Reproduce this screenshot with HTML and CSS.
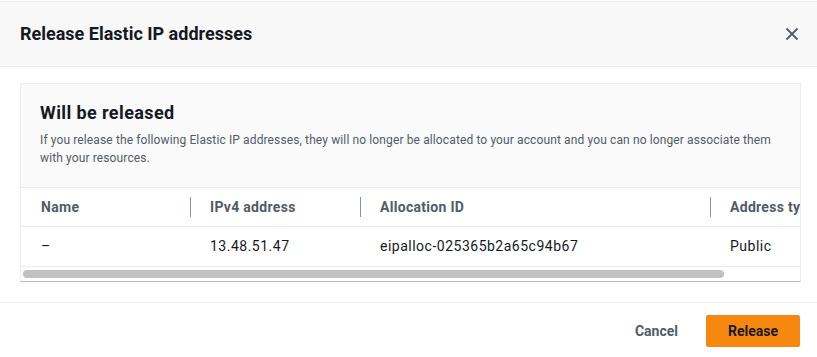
FILE: index.html
```html
<!DOCTYPE html>
<html lang="en">
<head>
    <meta charset="UTF-8">
    <meta name="viewport" content="width=device-width, initial-scale=1.0">
    <title>Release Elastic IP addresses</title>
    <link rel="stylesheet" href="styles.css">
</head>

<body>
    <div class="modal">
        <div class="modal-header">
            <h2 class="modal-title">Release Elastic IP addresses</h2>
            <button class="close-btn" aria-label="Close">
                <svg width="14" height="14" viewBox="0 0 14 14">
                    <path d="M1.5 1.5l11 11M12.5 1.5l-11 11" stroke="#545b64" stroke-width="1.8" fill="none"/>
                </svg>
            </button>
        </div>

        <div class="modal-body">
            <div class="panel">
                <div class="panel-header">
                    <h3 class="panel-title">Will be released</h3>
                    <p class="panel-desc">If you release the following Elastic IP addresses, they will no longer be allocated to your account and you can no longer associate them with your resources.</p>
                </div>
                <div class="table-wrap">
                    <table class="table">
                        <thead>
                            <tr>
                                <th class="col-name">Name</th>
                                <th class="col-ip">IPv4 address</th>
                                <th class="col-alloc">Allocation ID</th>
                                <th class="col-type">Address type</th>
                            </tr>
                        </thead>
                        <tbody>
                            <tr>
                                <td>–</td>
                                <td>13.48.51.47</td>
                                <td>eipalloc-025365b2a65c94b67</td>
                                <td>Public</td>
                            </tr>
                        </tbody>
                    </table>
                </div>
                <div class="scrollbar">
                    <div class="thumb"></div>
                </div>
            </div>
        </div>

        <div class="modal-footer">
            <button class="btn btn-link">Cancel</button>
            <button class="btn btn-primary">Release</button>
        </div>
    </div>
</body>

</html>
```

FILE: styles.css
```css
* {
    margin: 0;
    padding: 0;
    box-sizing: border-box;
    font-family: Roboto, 'Liberation Sans', sans-serif;
}

body {
    background: #ffffff;
    color: #16191f;
    width: 817px;
    height: 357px;
    overflow: hidden;
}

.modal {
    padding-top: 1px;
}

.modal-header {
    display: flex;
    align-items: center;
    justify-content: space-between;
    height: 66px;
    padding: 0 17px 0 20px;
    background: #f8f8f8;
    border-top: 1px solid #eaeded;
    border-bottom: 1px solid #eaeded;
}

.modal-title {
    font-size: 18px;
    line-height: 22px;
    font-weight: 700;
    color: #16191f;
}

.close-btn {
    border: none;
    background: none;
    width: 16px;
    height: 16px;
    display: flex;
    align-items: center;
    justify-content: center;
    cursor: pointer;
}

.modal-body {
    padding: 16px 16px 20px 20px;
}

.panel {
    border: 1px solid #eaeded;
    border-bottom-color: #b7bcc1;
    background: #ffffff;
    overflow: hidden;
}

.panel-header {
    background: #fafafa;
    padding: 18px 20px 20px 19px;
    border-bottom: 1px solid #eaeded;
}

.panel-title {
    font-size: 18px;
    line-height: 22px;
    font-weight: 700;
    letter-spacing: 0.4px;
    margin-bottom: 7px;
}

.panel-desc {
    font-size: 12px;
    line-height: 18px;
    letter-spacing: 0.12px;
    color: #545b64;
}

.table-wrap {
    overflow: hidden;
}

.table {
    border-collapse: collapse;
    table-layout: fixed;
    width: 900px;
    font-size: 14px;
}

.table th,
.table td {
    text-align: left;
    white-space: nowrap;
    padding: 0 20px;
}

.table th {
    height: 38px;
    font-weight: 700;
    letter-spacing: 0.3px;
    color: #545b64;
    position: relative;
    border-bottom: 1px solid #eaeded;
}

.table td {
    height: 40px;
    letter-spacing: 0.5px;
    border-bottom: 1px solid #eaeded;
}

.table th + th::before {
    content: "";
    position: absolute;
    left: 0;
    top: 9px;
    height: 20px;
    border-left: 1px solid #879596;
}

.col-name {
    width: 169px;
}

.col-ip {
    width: 170px;
}

.col-alloc {
    width: 350px;
}

.col-type {
    width: 211px;
}

.scrollbar {
    height: 14px;
    padding: 3px 2px 3px 2px;
}

.thumb {
    width: 701px;
    height: 8px;
    border-radius: 4px;
    background: #c1c1c1;
}

.modal-footer {
    display: flex;
    justify-content: flex-end;
    align-items: center;
    gap: 8px;
    border-top: 1px solid #eaeded;
    padding: 12px 17px 10px 20px;
}

.btn {
    height: 32px;
    border-radius: 2px;
    font-size: 14px;
    font-weight: 700;
    cursor: pointer;
}

.btn-link {
    background: none;
    border: none;
    color: #545b64;
    padding: 0 20px;
}

.btn-primary {
    width: 94px;
    background: #f6880f;
    border: 1px solid #f6880f;
    color: #16191f;
}
```
